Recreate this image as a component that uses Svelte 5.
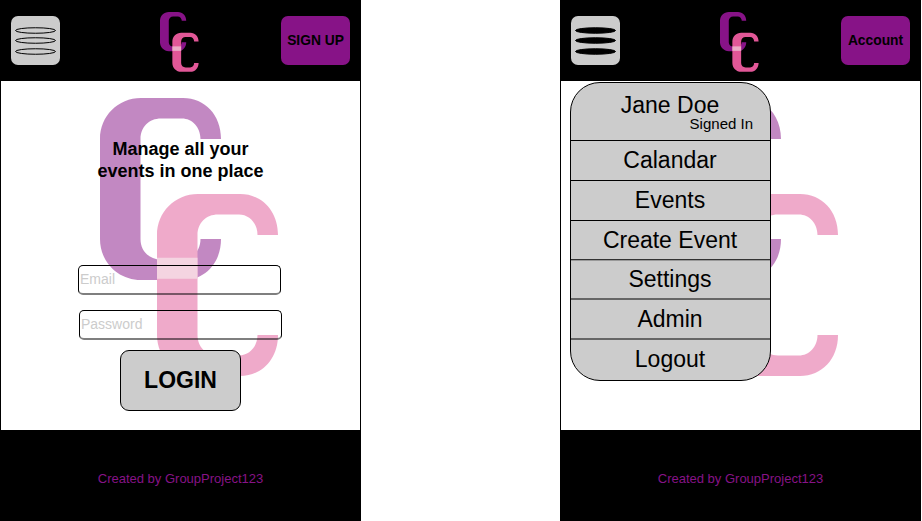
<script>
  const menu = ['Calandar', 'Events', 'Create Event', 'Settings', 'Admin', 'Logout'];
  const c =
    'M0 41C0 18 18 0 41 0H83C105 0 121 17 121 41H100.5C100.5 29 92 20.5 82 20.5H61C49 20.5 40.5 29 40.5 41V141C40.5 153 49 161.5 61 161.5H82C92 161.5 100.5 153 100.5 141H121C121 165 105 182 83 182H41C18 182 0 164 0 141Z';
</script>

{#snippet logo(kind)}
  <svg class="logo {kind}" viewBox="0 0 178 278" preserveAspectRatio="none" aria-hidden="true">
    <path d={c} fill="#871387" />
    <path d={c} fill="#e15797" transform="translate(57 96)" />
    <path d="M57 159.7H97.5V180.7H57Z" fill="#ebabc5" />
  </svg>
{/snippet}

{#snippet header(label, filled)}
  <header>
    <button class="burger" aria-label="Menu">
      <svg class:filled width="49" height="49" viewBox="0 0 49 49">
        <ellipse cx="24.5" cy="14.5" rx="20" ry="2.75" />
        <ellipse cx="24.5" cy="24.5" rx="20" ry="2.75" />
        <ellipse cx="24.5" cy="35.5" rx="20" ry="2.75" />
      </svg>
    </button>
    {@render logo('small')}
    <button class="action">{label}</button>
  </header>
{/snippet}

<div class="board">
  <section class="screen">
    {@render header('SIGN UP', false)}
    <main>
      {@render logo('backdrop')}
      <div class="login">
        <h1>Manage all your<br />events in one place</h1>
        <input placeholder="Email" />
        <input class="password" placeholder="Password" />
        <button class="submit">LOGIN</button>
      </div>
    </main>
    <footer>Created by GroupProject123</footer>
  </section>

  <section class="screen">
    {@render header('Account', true)}
    <main>
      {@render logo('backdrop')}
      <nav>
        <div class="user">
          <span class="name">Jane Doe</span>
          <span class="status">Signed In</span>
        </div>
        {#each menu as item}
          <div class="item"><span>{item}</span></div>
        {/each}
      </nav>
    </main>
    <footer>Created by GroupProject123</footer>
  </section>
</div>

<style>
  :global(body) {
    margin: 0;
    background: #fff;
    overflow: hidden;
  }
  .board {
    display: flex;
    gap: 199px;
    width: 922px;
    height: 521px;
    font-family: 'Liberation Sans', Arial, sans-serif;
    color: #000;
  }
  .screen {
    display: flex;
    flex-direction: column;
    flex: none;
    width: 361px;
    height: 521px;
  }
  button {
    font-family: inherit;
    color: #000;
    padding: 0;
    border: 0;
    flex: none;
  }
  header {
    display: flex;
    align-items: flex-start;
    height: 81px;
    box-sizing: border-box;
    padding: 12px 11px 0;
    background: #000;
  }
  .burger {
    width: 49px;
    height: 49px;
    margin-top: 4px;
    border-radius: 7px;
    background: #ccc;
  }
  .burger svg {
    display: block;
    fill: none;
    stroke: #000;
    stroke-width: 1;
  }
  .burger svg.filled {
    fill: #000;
  }
  .logo {
    display: block;
    flex: none;
  }
  .small {
    width: 38.6px;
    height: 59.8px;
    margin-left: 100px;
  }
  .action {
    width: 69px;
    height: 49px;
    margin: 4px 0 0 auto;
    border-radius: 7px;
    background: #871387;
    font-size: 13.8px;
    font-weight: bold;
  }
  main {
    position: relative;
    height: 349px;
    box-sizing: border-box;
    border: solid #000;
    border-width: 0 1px;
    background: #fff;
  }
  .backdrop {
    position: absolute;
    left: 99px;
    top: 17px;
    width: 178px;
    height: 278px;
    opacity: 0.5;
  }
  .login {
    position: relative;
    display: flex;
    flex-direction: column;
    align-items: center;
    padding-top: 57px;
  }
  h1 {
    margin: 0 0 83px;
    font-size: 18px;
    line-height: 22px;
    text-align: center;
  }
  input {
    box-sizing: border-box;
    width: 203px;
    height: 30px;
    margin: 0 2px 15px 0;
    padding: 0 1px 1px;
    border: 1px solid #000;
    border-bottom: 2px solid rgba(0, 0, 0, 0.5);
    border-radius: 5px;
    background: transparent;
    font: 14px 'Liberation Sans', Arial, sans-serif;
    outline: none;
  }
  input::placeholder {
    color: #ccc;
    opacity: 1;
  }
  .password {
    margin: 0 0 10px;
  }
  .submit {
    width: 121px;
    height: 61px;
    border: 1px solid #000;
    border-radius: 9px;
    background: #ccc;
    font-size: 23px;
    font-weight: bold;
  }
  nav {
    position: relative;
    box-sizing: border-box;
    width: 201px;
    height: 299px;
    margin: 0 0 0 9px;
    top: 1px;
    border: 1px solid #000;
    border-radius: 30px;
    background: #ccc;
    overflow: hidden;
    font-size: 23px;
    text-align: center;
  }
  .user {
    display: flex;
    flex-direction: column;
    height: 57px;
    box-sizing: border-box;
    padding-top: 9px;
  }
  .name {
    line-height: 26px;
    padding-right: 1px;
  }
  .status {
    font-size: 15px;
    line-height: 16px;
    margin-top: -2px;
    padding-right: 17px;
    text-align: right;
  }
  .item {
    box-sizing: border-box;
    height: 40px;
    padding-right: 1px;
    border-top: 1px solid #000;
    line-height: 39px;
  }
  .item:nth-child(4) {
    height: 39px;
  }
  .item:nth-child(5) {
    height: 39px;
    border-top: 1px solid #333;
    box-shadow: inset 0 1px #999;
  }
  .item:nth-child(n + 6) {
    border-top: 2px solid #666;
  }
  footer {
    display: flex;
    align-items: center;
    justify-content: center;
    height: 91px;
    box-sizing: border-box;
    padding-top: 6px;
    background: #000;
    color: #871387;
    font-size: 13px;
  }
</style>
